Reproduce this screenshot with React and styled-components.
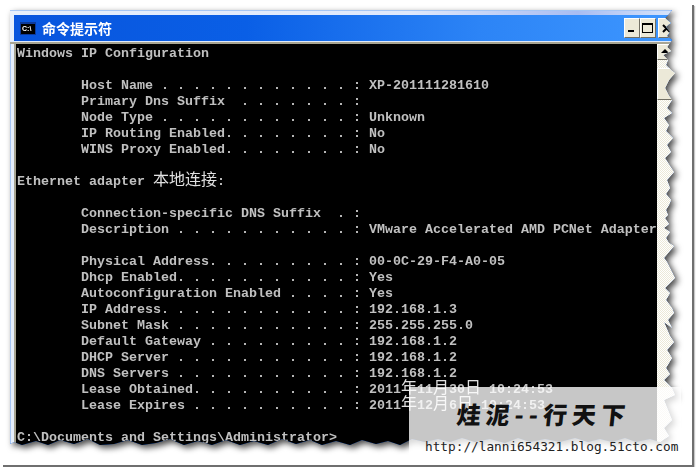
import React from "react";
import styled, { createGlobalStyle } from "styled-components";

const lines = [
  "Windows IP Configuration",
  "",
  "        Host Name . . . . . . . . . . . . : XP-201111281610",
  "        Primary Dns Suffix  . . . . . . . :",
  "        Node Type . . . . . . . . . . . . : Unknown",
  "        IP Routing Enabled. . . . . . . . : No",
  "        WINS Proxy Enabled. . . . . . . . : No",
  "",
  "Ethernet adapter 本地连接:",
  "",
  "        Connection-specific DNS Suffix  . :",
  "        Description . . . . . . . . . . . : VMware Accelerated AMD PCNet Adapter",
  "",
  "        Physical Address. . . . . . . . . : 00-0C-29-F4-A0-05",
  "        Dhcp Enabled. . . . . . . . . . . : Yes",
  "        Autoconfiguration Enabled . . . . : Yes",
  "        IP Address. . . . . . . . . . . . : 192.168.1.3",
  "        Subnet Mask . . . . . . . . . . . : 255.255.255.0",
  "        Default Gateway . . . . . . . . . : 192.168.1.2",
  "        DHCP Server . . . . . . . . . . . : 192.168.1.2",
  "        DNS Servers . . . . . . . . . . . : 192.168.1.2",
  "        Lease Obtained. . . . . . . . . . : 2011年11月30日 10:24:53",
  "        Lease Expires . . . . . . . . . . : 2011年12月6日 10:24:53",
  "",
  "C:\\Documents and Settings\\Administrator>",
];

// torn edge of the screenshot, in page coordinates
const tornEdge = [
  [10, 10], [672, 10], [669, 14], [665, 18], [671, 23], [666, 27], [670, 32], [667, 36], [672, 40],
  [667, 47], [671, 51], [663, 55], [668, 60], [666, 65], [672, 71], [675, 73], [669, 80], [665, 88],
  [669, 96], [672, 100], [667, 108], [672, 113], [664, 118], [669, 125], [666, 131], [673, 138],
  [667, 145], [671, 152], [665, 158], [670, 166], [674, 172], [667, 180], [670, 188], [666, 194],
  [671, 200], [669, 205], [666, 210], [668, 215], [665, 218], [669, 224], [664, 228], [670, 232],
  [666, 238], [669, 243], [674, 246], [664, 258], [667, 262], [672, 272], [675, 278], [668, 285],
  [665, 288], [670, 293], [666, 300], [672, 308], [674, 313], [668, 320], [672, 328], [664, 322],
  [670, 336], [674, 342], [667, 350], [664, 345], [672, 358], [666, 368], [670, 374], [664, 380],
  [672, 388], [675, 395], [664, 400], [668, 410], [672, 420], [664, 428], [669, 436], [660, 442],
  [650, 439], [636, 442], [625, 438], [612, 442], [600, 439], [588, 442], [575, 438], [560, 442],
  [545, 439], [530, 442], [518, 438], [505, 443], [490, 439], [475, 442], [462, 438], [450, 442],
  [438, 439], [425, 442], [412, 439], [400, 445], [388, 441], [376, 444], [362, 440], [350, 445],
  [336, 441], [322, 445], [310, 440], [296, 444], [282, 439], [268, 445], [254, 441], [240, 445],
  [226, 440], [212, 445], [198, 441], [184, 445], [170, 439], [156, 443], [142, 445], [128, 440],
  [114, 444], [100, 445], [88, 439], [74, 444], [60, 440], [48, 445], [36, 441], [22, 445], [14, 442],
  [10, 444],
];
const tornClip = tornEdge.map(([x, y]) => `${x - 10}px ${y - 10}px`).join(", ");

const GlobalStyle = createGlobalStyle`
  html, body {
    margin: 0;
    padding: 0;
    background: #fff;
    overflow: hidden;
  }
`;

const Page = styled.div`
  position: relative;
  box-sizing: content-box;
  width: 689px;
  height: 460px;
  margin: 5px 0 0 3px;
  padding: 0;
  border-right: 2px solid #6f6f6f;
  border-bottom: 2px solid #6f6f6f;
  box-shadow: 1px 1px 1px #c8c8c8;
`;

const Shadow = styled.div`
  padding: 5px 0 0 7px;
  filter: drop-shadow(3px 3px 3px rgba(0, 0, 0, 0.7));
`;

const Window = styled.div`
  display: flex;
  flex-direction: column;
  width: 668px;
  height: 438px;
  clip-path: polygon(${tornClip});
  background: #0a5ce0;
`;

const TopStrip = styled.div`
  height: 4px;
  border-top: 1px solid #a6c6f4;
  background: linear-gradient(90deg, #e6effc, #dfe8fb 60%, #a9bdf2 85%, #d8e6fb);
`;

const TitleBar = styled.div`
  display: flex;
  align-items: center;
  height: 26px;
  padding-left: 6px;
  border-left: 4px solid #e6effc;
  background: linear-gradient(90deg, #0855dd, #0a5fe6 35%, #2c84f6 70%, #3e97ff);
`;

const TitleRule = styled.div`
  height: 1px;
  border-bottom: 2px solid #a8a593;
  background: #dfeafb;
`;

const ConsoleIcon = styled.div`
  box-sizing: border-box;
  width: 16px;
  height: 13px;
  border: 1px solid #0c3a9c;
  border-top-width: 2px;
  background: #000;
  color: #fff;
  font: 700 7px/9px "Liberation Sans", sans-serif;
  text-indent: 1px;
  overflow: hidden;
  white-space: nowrap;
`;

const Title = styled.span`
  margin-left: 6px;
  color: #fff;
  font: 700 14px/16px "Noto Sans CJK SC", sans-serif;
`;

const WindowButtons = styled.div`
  display: flex;
  margin-left: auto;
  margin-right: 4px;
`;

const TitleButton = styled.div`
  box-sizing: border-box;
  position: relative;
  width: 16px;
  height: 20px;
  margin-left: ${(p) => p.$gap || 0}px;
  background: #ece9d8;
  border: 1px solid;
  border-color: #fff #716f64 #716f64 #fff;
`;

const MinGlyph = styled.div`
  position: absolute;
  left: 3px;
  bottom: 5px;
  width: 6px;
  height: 2px;
  background: #000;
`;

const MaxGlyph = styled.div`
  position: absolute;
  left: 1px;
  top: 4px;
  width: 9px;
  height: 7px;
  border: 1px solid #000;
  border-top-width: 2px;
`;

const CloseGlyph = styled.svg`
  position: absolute;
  left: 3px;
  top: 5px;
`;

const Body = styled.div`
  display: flex;
  flex: 1;
  min-height: 0;
`;

const LeftEdge = styled.div`
  box-sizing: border-box;
  width: 6px;
  border-left: 1px solid #a6c6f4;
  background: linear-gradient(90deg, #e6effc 0 3px, #a8a593 3px);
`;

const Console = styled.div`
  width: 641px;
  padding: 2px 0 0 1px;
  box-sizing: border-box;
  background: #000;
  overflow: hidden;
`;

const Row = styled.div`
  height: 16px;
  color: #c0c0c0;
  font: 700 13.33px/16px "Liberation Mono", monospace;
  white-space: pre;
`;

const Cjk = styled.span`
  color: #e0e0e0;
  font: 400 16px/0 "Noto Sans CJK SC", sans-serif;
`;

const Scrollbar = styled.div`
  display: flex;
  flex-direction: column;
  width: 21px;
  background-color: #fff;
  background-image: repeating-conic-gradient(#ece9d8 0 25%, #fff 0 50%);
  background-size: 2px 2px;
`;

const ScrollButton = styled.div`
  box-sizing: border-box;
  position: relative;
  height: 16px;
  background: #ece9d8;
  border: 1px solid;
  border-color: #fff #716f64 #716f64 #fff;

  &::after {
    content: "";
    position: absolute;
    left: 3px;
    top: 4px;
    border: 4px solid transparent;
    border-top: 0;
    border-bottom-color: #000;
  }
`;

const ScrollThumb = styled.div`
  height: 30px;
  margin-top: 8px;
  background: #ece9d8;
  border: 1px solid;
  border-color: #fff #716f64 #716f64 #fff;
`;

const Watermark = styled.div`
  position: absolute;
  left: 406px;
  top: 382px;
  width: 272px;
  height: 76px;
  display: flex;
  flex-direction: column;
  background: rgba(255, 255, 255, 0.78);
`;

const Motto = styled.div`
  height: 52px;
  padding: 14px 0 0 48px;
  box-sizing: border-box;
  color: #111;
  font: 900 24px/26px "Noto Sans CJK SC", sans-serif;
  letter-spacing: 5px;
  white-space: pre;
  transform: skewX(-6deg);
`;

const BlogUrl = styled.div`
  padding-left: 16px;
  color: #222;
  font: 400 12.75px/16px "DejaVu Sans Mono", monospace;
  white-space: pre;
`;

function Line({ text }) {
  return (
    <Row>
      {text.split(/([\u4e00-\u9fff]+)/).map((part, index) =>
        index % 2 ? <Cjk key={index}>{part}</Cjk> : part
      )}
    </Row>
  );
}

export default function App() {
  return (
    <>
      <GlobalStyle />
      <Page>
        <Shadow>
          <Window>
            <TopStrip />
            <TitleBar>
              <ConsoleIcon>C:\</ConsoleIcon>
              <Title>命令提示符</Title>
              <WindowButtons>
                <TitleButton>
                  <MinGlyph />
                </TitleButton>
                <TitleButton>
                  <MaxGlyph />
                </TitleButton>
                <TitleButton $gap={2}>
                  <CloseGlyph width="9" height="9" viewBox="0 0 9 9">
                    <path d="M1 1l7 7M8 1L1 8" stroke="#000" strokeWidth="2" fill="none" />
                  </CloseGlyph>
                </TitleButton>
              </WindowButtons>
            </TitleBar>
            <TitleRule />
            <Body>
              <LeftEdge />
              <Console>
                {lines.map((line, index) => (
                  <Line key={index} text={line} />
                ))}
              </Console>
              <Scrollbar>
                <ScrollButton />
                <ScrollThumb />
              </Scrollbar>
            </Body>
          </Window>
        </Shadow>
        <Watermark>
          <Motto>烓泥--行天下</Motto>
          <BlogUrl>http://lanni654321.blog.51cto.com</BlogUrl>
        </Watermark>
      </Page>
    </>
  );
}
